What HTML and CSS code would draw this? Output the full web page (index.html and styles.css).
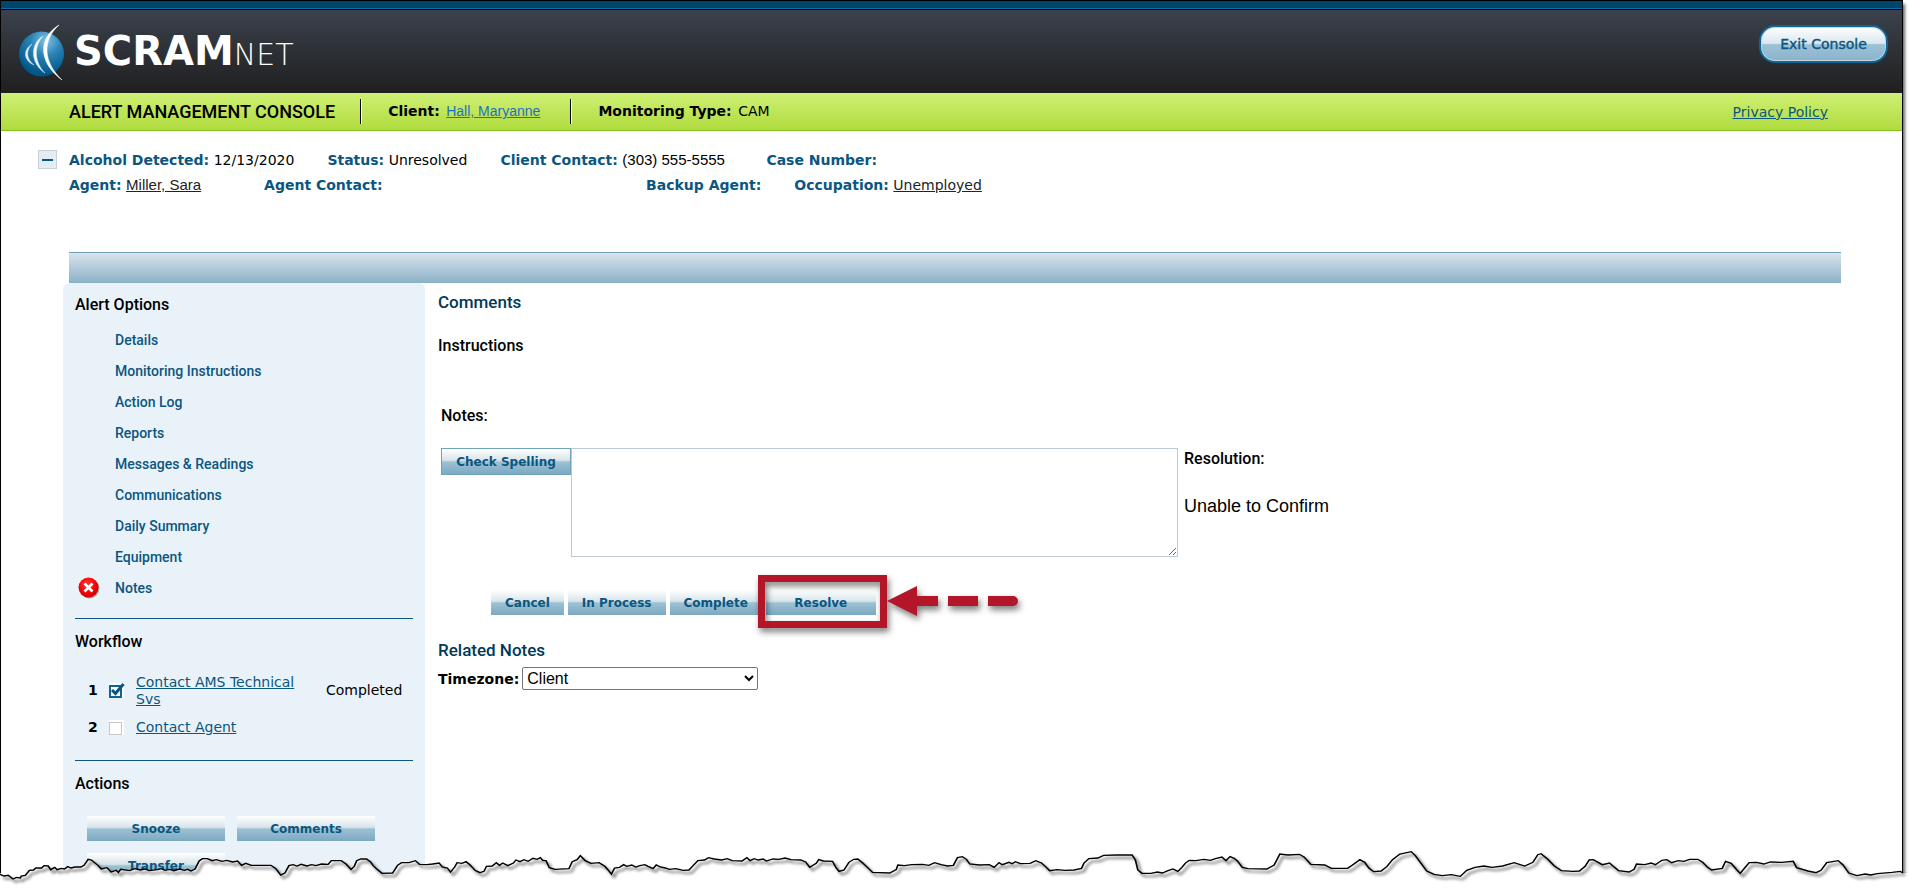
FILE: index.html
```html
<!DOCTYPE html>
<html lang="en">
<head>
    <meta charset="UTF-8">
    <meta name="viewport" content="width=device-width, initial-scale=1.0">
    <title>SCRAMnet - Alert Management Console</title>
    <link rel="stylesheet" href="styles.css">
</head>
<body>
    <div class="page">
        <header class="banner">
            <div class="logo">
                <svg class="logo-mark" width="48" height="58" viewBox="0 0 48 58">
                    <defs>
                        <radialGradient id="globe" cx="60%" cy="20%" r="75%">
                            <stop offset="0" stop-color="#7cc4ea"/>
                            <stop offset="0.45" stop-color="#2b83b4"/>
                            <stop offset="1" stop-color="#00578a"/>
                        </radialGradient>
                    </defs>
                    <circle cx="23.5" cy="30" r="22.5" fill="url(#globe)"/>
                    <path d="M41 1C20 14 20 38 44 56C25 38 24 16 41 1Z" fill="#fff" stroke="#fff" stroke-width="0.6"/>
                    <path d="M25 12C12 20 12 39 27 49C16 38 16 22 25 12Z" fill="#f2f8fc" stroke="#d9eaf4" stroke-width="0.5"/>
                    <path d="M14 20C5 26 5 36 16 41C8 35 8 26 14 20Z" fill="#e3f0f7" stroke="#c4deec" stroke-width="0.5"/>
                </svg>
                <span class="logo-text">SCRAM<span class="logo-net">NET</span></span>
            </div>
            <button class="exit-button" type="button">Exit Console</button>
        </header>

        <div class="title-bar">
            <h1>ALERT MANAGEMENT CONSOLE</h1>
            <p class="title-item"><b>Client:</b> <a class="client-link" href="#">Hall, Maryanne</a></p>
            <p class="title-item"><b>Monitoring Type:</b> CAM</p>
            <a class="privacy" href="#">Privacy Policy</a>
        </div>

        <section class="info">
            <button class="collapse" type="button" aria-label="Collapse"></button>
            <div class="info-rows">
                <div class="info-row">
                    <span><b>Alcohol Detected:</b> 12/13/2020</span>
                    <span><b>Status:</b> Unresolved</span>
                    <span class="client-contact"><b>Client Contact:</b> <span class="arial">(303) 555-5555</span></span>
                    <span><b>Case Number:</b></span>
                </div>
                <div class="info-row second">
                    <span><b>Agent:</b> <a class="arial" href="#">Miller, Sara</a></span>
                    <span class="agent-contact"><b>Agent Contact:</b></span>
                    <span><b>Backup Agent:</b></span>
                    <span><b>Occupation:</b> <a href="#">Unemployed</a></span>
                </div>
            </div>
        </section>

        <div class="band"></div>

        <div class="columns">
            <aside class="sidebar">
                <h3>Alert Options</h3>
                <ul class="options">
                    <li><a href="#">Details</a></li>
                    <li><a href="#">Monitoring Instructions</a></li>
                    <li><a href="#">Action Log</a></li>
                    <li><a href="#">Reports</a></li>
                    <li><a href="#">Messages &amp; Readings</a></li>
                    <li><a href="#">Communications</a></li>
                    <li><a href="#">Daily Summary</a></li>
                    <li><a href="#">Equipment</a></li>
                    <li>
                        <svg class="error-icon" width="22" height="22" viewBox="0 0 22 22">
                            <defs>
                                <radialGradient id="red" cx="45%" cy="35%" r="65%">
                                    <stop offset="0" stop-color="#ff3a3a"/>
                                    <stop offset="0.7" stop-color="#f00000"/>
                                    <stop offset="1" stop-color="#c00000"/>
                                </radialGradient>
                            </defs>
                            <circle cx="11.5" cy="11.5" r="10" fill="#777" opacity="0.6"/>
                            <circle cx="10.5" cy="10.5" r="10" fill="url(#red)"/>
                            <path d="M6.5 6.5L14.5 14.5M14.5 6.5L6.5 14.5" stroke="#fff" stroke-width="2.6"/>
                        </svg>
                        <a href="#">Notes</a>
                    </li>
                </ul>

                <hr>
                <h3>Workflow</h3>
                <table class="workflow">
                    <tr>
                        <th>1</th>
                        <td class="tick">
                            <svg width="16" height="16" viewBox="0 0 16 16">
                                <rect width="15" height="15" fill="#fff"/>
                                <rect x="1" y="3" width="11" height="11" fill="#fff" stroke="#14648f" stroke-width="2"/>
                                <path d="M3 7L6.5 10.5L14.5 1" fill="none" stroke="#0b5680" stroke-width="3"/>
                            </svg>
                        </td>
                        <td class="step"><a href="#">Contact AMS Technical Svs</a></td>
                        <td>Completed</td>
                    </tr>
                    <tr>
                        <th>2</th>
                        <td class="tick">
                            <svg width="16" height="16" viewBox="0 0 16 16">
                                <rect width="15" height="15" fill="#fff"/>
                                <rect x="0.5" y="2.5" width="12" height="12" fill="#fff" stroke="#c8c8c8"/>
                            </svg>
                        </td>
                        <td class="step"><a href="#">Contact Agent</a></td>
                        <td></td>
                    </tr>
                </table>

                <hr>
                <h3>Actions</h3>
                <div class="actions">
                    <button class="bar-button" type="button">Snooze</button>
                    <button class="bar-button" type="button">Comments</button>
                    <button class="bar-button" type="button">Transfer</button>
                </div>
            </aside>

            <main class="content">
                <h2>Comments</h2>
                <h3 class="instructions">Instructions</h3>
                <h3 class="notes-title"><label for="notes">Notes:</label></h3>
                <div class="notes-row">
                    <button class="bar-button spelling" type="button">Check Spelling</button>
                    <textarea id="notes"></textarea>
                    <div class="resolution">
                        <h3>Resolution:</h3>
                        <p>Unable to Confirm</p>
                    </div>
                </div>

                <div class="buttons">
                    <button class="bar-button" type="button">Cancel</button>
                    <button class="bar-button" type="button">In Process</button>
                    <button class="bar-button" type="button">Complete</button>
                    <div class="resolve-wrap">
                        <button class="bar-button resolve" type="button">Resolve</button>
                        <div class="callout"></div>
                        <svg class="arrow" width="140" height="40" viewBox="0 0 140 40">
                            <path d="M0 16L30 1V11H51V21H30V31ZM61 11H91V21H61ZM101 11H126A5 5 0 0 1 126 21H101Z" fill="#b31629"/>
                        </svg>
                    </div>
                </div>

                <h2 class="related">Related Notes</h2>
                <div class="timezone">
                    <label for="timezone">Timezone:</label>
                    <select id="timezone">
                        <option>Client</option>
                        <option>Agent</option>
                    </select>
                </div>
            </main>
        </div>
    </div>

    <!-- torn paper edge over the bottom of the page -->
    <svg class="torn" viewBox="0 0 4680 213" preserveAspectRatio="none">
        <defs>
            <path id="edge" d="M0 163L10 168L20 166L32 177L40 172L50 174L52 168L62 166L72 151L82 150L88 144L102 144L108 137L118 138L124 149L134 142L140 149L150 145L158 147L166 140L174 144L184 141L198 141L206 136L216 118L224 120L240 136L248 147L262 143L272 156L284 151L290 157L296 148L318 152L330 146L344 150L354 147L366 152L386 149L396 146L404 151L416 148L426 152L440 147L452 151L460 148L468 153L478 147L488 123L496 116L508 116L520 122L530 119L544 124L556 121L570 126L582 123L592 136L602 130L616 136L664 136L676 146L688 165L698 159L708 137L718 134L728 138L738 133L752 138L764 134L774 137L788 132L804 133L812 122L836 122L848 132L860 148L868 139L874 122L884 117L898 117L908 126L914 136L924 148L936 160L962 159L974 136L984 128L1002 128L1018 122L1028 133L1046 134L1060 132L1076 129L1084 141L1096 144L1104 156L1114 141L1120 128L1132 130L1142 125L1152 135L1164 151L1176 158L1186 154L1192 139L1206 138L1216 128L1224 136L1232 129L1244 137L1258 129L1264 120L1274 125L1284 119L1294 124L1306 115L1316 118L1324 113L1330 121L1338 122L1346 143L1360 148L1394 146L1402 125L1414 119L1422 107L1434 122L1448 130L1468 128L1482 139L1490 150L1498 162L1506 144L1518 142L1528 134L1536 139L1548 135L1558 141L1568 137
            L1580 134L1588 139L1600 146L1608 135L1618 141L1630 144L1640 148L1656 146L1674 151L1688 150L1696 140L1710 122L1726 120L1736 113L1750 117L1768 120L1782 116L1794 122L1818 123L1830 113L1838 122L1848 116L1858 120L1870 117L1878 123L1894 117L1908 118L1924 114L1938 119L1962 120L1974 126L1984 142L2000 130L2006 119L2018 123L2040 124L2048 142L2056 154L2068 150L2080 127L2092 118L2102 117L2114 129L2128 145L2138 157L2180 159L2196 149L2200 135L2216 137L2234 134L2260 133L2276 136L2290 128L2306 134L2322 138L2336 136L2346 113L2358 110L2368 118L2376 132L2400 135L2424 134L2436 142L2448 128L2456 134L2472 127L2480 131L2488 125L2500 131L2524 130L2538 122L2552 129L2562 140L2572 152L2590 149L2610 151L2632 150L2650 145L2656 129L2668 116L2690 114L2704 106L2734 105L2774 105L2782 120L2788 150L2798 160L2820 160L2836 156L2848 159L2862 152L2874 147L2886 154L2896 142L2904 130L2914 121L2930 122L2950 118L2966 121L2978 116L2994 111L3004 122L3014 110L3024 115L3032 123L3044 142L3058 146L3104 147L3122 135L3136 102L3156 105L3184 103L3196 112L3212 133L3246 135L3262 145L3302 145L3314 135L3332 119L3344 127L3354 144L3366 155L3384 153L3398 140L3412 119L3430 102L3458 95L3468 107L3482 130L3496 153L3514 163L3534 167L3556 164L3578 169L3594 151L3614 142L3636 138L3656 142L3682 138L3710 128L3736 138L3756 127L3768 104L3776 101L3792 117L3808 137L3826 152L3854 154L3870 153L3884 139L3894 120L3904 119L3926 134L3944 129L3956 142L3966 152L3992 156L4004 148L4010 132L4030 134L4046 129L4056 134L4072 121L4084 119L4096 128L4112 122L4126 124L4140 118L4160 118L4172 127L4184 142L4194 150L4220 145L4228 124L4242 130L4256 150L4264 160L4276 142L4286 128L4304 127L4322 132L4338 126L4366 127L4394 124L4402 143L4430 153L4450 158L4462 151L4476 128L4504 122L4516 135L4530 159L4550 167L4570 162L4584 165L4600 161L4636 157L4656 154L4661 157"/>
        </defs>
        <rect class="torn-cover" y="160" width="4680" height="53"/>
        <use class="torn-cover" href="#edge"/>
        <use class="torn-line" href="#edge"/>
    </svg>
</body>
</html>
```
FILE: styles.css
```css
* {
    box-sizing: border-box;
}
body {
    margin: 0;
    padding-right: 7px;
    position: relative;
    height: 100vh;
    overflow: hidden;
    background: #fff;
    color: #000;
    font-family: "DejaVu Sans", Verdana, sans-serif;
    font-size: 14px;
}
h1, h2, h3, p, ul {
    margin: 0;
    padding: 0;
}
h1, h2, h3, .options {
    font-family: "Arial Narrow", Roboto, sans-serif;
    font-weight: 500;
}
button, select, textarea {
    font: inherit;
}
a {
    color: #0b5680;
}
.arial {
    font-family: "Liberation Sans", Arial, sans-serif;
    font-size: 15px;
}
.page {
    height: 100%;
    border: 1px solid #000;
    border-bottom: 0;
    box-shadow: 2px 4px 3px rgba(0, 0, 0, 0.6);
    overflow: hidden;
}

/* top banner */
.banner {
    display: flex;
    justify-content: space-between;
    align-items: flex-start;
    height: 92px;
    padding: 14px 14px 0 17px;
    border-top: 7px solid #00466b;
    background: linear-gradient(#0d6ea6 1px, #000 1px, #000 2px, #3b424d 2px, #1f1f1f);
}
.logo {
    display: flex;
    align-items: center;
    gap: 8px;
}
.logo-text {
    color: #fff;
    font-size: 40px;
    font-weight: bold;
    line-height: 58px;
}
.logo-net {
    font-size: 30px;
    font-weight: 200;
}
.exit-button {
    width: 129px;
    height: 38px;
    margin-top: 3px;
    padding: 0;
    border: 2px solid #0f6595;
    border-radius: 16px;
    background: linear-gradient(#fff, #dbe7ee 48%, #9dc1d5 52%, #8ab3ca);
    box-shadow: inset 0 0 0 1px #c5d6e0;
    color: #0b5680;
    font-size: 14px;
    -webkit-text-stroke: 0.4px #0b5680;
}

/* green bar */
.title-bar {
    display: flex;
    align-items: center;
    height: 38px;
    padding: 0 74px 0 68px;
    background: linear-gradient(#cff075, #b0db3d);
    border-bottom: 1px solid #7fc31c;
}
.title-bar h1 {
    font-size: 18px;
}
.title-item {
    margin-left: 25px;
    padding-left: 27px;
    line-height: 25px;
    border-left: 1px solid #000;
    box-shadow: inset 1px 0 #fff;
}
.title-item b {
    margin-right: 2px;
}
.client-link {
    color: #1f6fc0;
    font-family: "Liberation Sans", Arial, sans-serif;
    font-size: 14px;
    margin-right: 5px;
}
.privacy {
    margin-left: auto;
}

/* alert info */
.info {
    display: flex;
    gap: 12px;
    height: 121px;
    padding: 19px 0 0 37px;
}
.collapse {
    width: 19px;
    height: 19px;
    padding: 0;
    border: 1px solid #c8d0d6;
    background: linear-gradient(#0b5680, #0b5680) center / 11px 2px no-repeat, #e2edf4;
}
.info-row {
    display: flex;
    gap: 33px;
    line-height: 20px;
    white-space: nowrap;
}
.info-row.second {
    margin-top: 5px;
}
.info-row b {
    color: #0b5680;
}
.info-row a {
    color: #222;
}
.client-contact {
    width: 233px;
}
.agent-contact {
    margin-left: 30px;
    width: 349px;
}

.band {
    height: 31px;
    margin: 0 61px 0 68px;
    border-top: 1px solid #6fa0b9;
    background: linear-gradient(#d9e3ec, #8bb1c7);
}
.columns {
    display: flex;
    margin-left: 62px;
    gap: 13px;
}

/* left column */
.sidebar {
    width: 362px;
    height: 640px;
    flex: none;
    padding: 11px 12px 0;
    border-radius: 6px;
    background: #eaf2f9;
}
h3 {
    font-size: 16px;
    line-height: 22px;
}
hr {
    height: 1px;
    margin: 0 0 12px;
    border: 0;
    background: #0b5680;
}
.options {
    list-style: none;
    margin: 8px 0 15px;
    font-size: 14px;
}
.options li {
    display: flex;
    align-items: center;
    justify-content: flex-end;
    height: 31px;
}
.options a {
    width: 298px;
    text-decoration: none;
}
.error-icon {
    margin-right: 15px;
}
.workflow {
    border-spacing: 0;
    width: 100%;
    height: 74px;
    margin: 13px 0 20px;
    line-height: 17px;
}
.workflow th {
    width: 34px;
    padding: 0 0 0 13px;
    text-align: left;
}
.workflow td {
    padding: 0;
}
.workflow .tick {
    width: 27px;
}
.tick svg {
    display: block;
}
.workflow .step {
    width: 190px;
    padding-right: 20px;
}
.actions {
    display: flex;
    flex-wrap: wrap;
    gap: 12px;
    padding: 21px 12px 0;
}
.bar-button {
    height: 25px;
    padding: 0 14px;
    border: 0;
    background: linear-gradient(#fff, #d8e4ea 45%, #9dc1d3 52%, #7ba9c3);
    color: #0b5680;
    font-size: 12px;
    font-weight: bold;
}
.actions .bar-button {
    width: 138px;
}

/* right column */
.content {
    flex: 1;
}
h2 {
    color: #003a57;
    font-size: 17px;
    line-height: 24px;
    padding-top: 7px;
}
.instructions {
    margin-top: 21px;
}
.notes-title {
    margin: 48px 0 0 3px;
}
.notes-row {
    display: flex;
    align-items: flex-start;
    margin: 21px 0 0 3px;
}
.spelling {
    height: 27px;
    width: 130px;
    padding: 0;
    border: 1px solid #6fa3bb;
}
#notes {
    width: 607px;
    height: 109px;
    border: 1px solid #b9cbd8;
}
.resolution {
    padding-left: 6px;
}
.resolution p {
    margin-top: 26px;
    font-family: "Liberation Sans", Arial, sans-serif;
    font-size: 18px;
    line-height: 20px;
}
.buttons {
    display: flex;
    gap: 4px;
    margin: 33px 0 0 53px;
}
.resolve-wrap {
    position: relative;
}
.resolve {
    width: 110px;
}
.callout {
    position: absolute;
    top: -15px;
    left: -8px;
    width: 129px;
    height: 53px;
    border: 7px solid #b31629;
    filter: drop-shadow(2px 4px 3px rgba(0, 0, 0, 0.5));
}
.arrow {
    position: absolute;
    top: -5px;
    left: 121px;
    filter: drop-shadow(2px 4px 3px rgba(0, 0, 0, 0.5));
}
.related {
    margin-top: 16px;
}
.timezone {
    display: flex;
    align-items: center;
    gap: 3px;
    margin-top: 5px;
    font-weight: bold;
}
.timezone select {
    width: 236px;
    height: 23px;
    border: 1px solid #767676;
    border-radius: 2px;
    background: #fff;
    font-family: "Liberation Sans", Arial, sans-serif;
    font-size: 16px;
    font-weight: normal;
}

.torn {
    position: absolute;
    left: 0;
    bottom: 0;
    width: 100%;
    height: 71px;
}
.torn-cover {
    fill: #fff;
}
.torn-line {
    fill: none;
    stroke: #000;
    stroke-width: 4px;
    filter: drop-shadow(7px 9px 4px rgba(0, 0, 0, 0.7));
}
```
